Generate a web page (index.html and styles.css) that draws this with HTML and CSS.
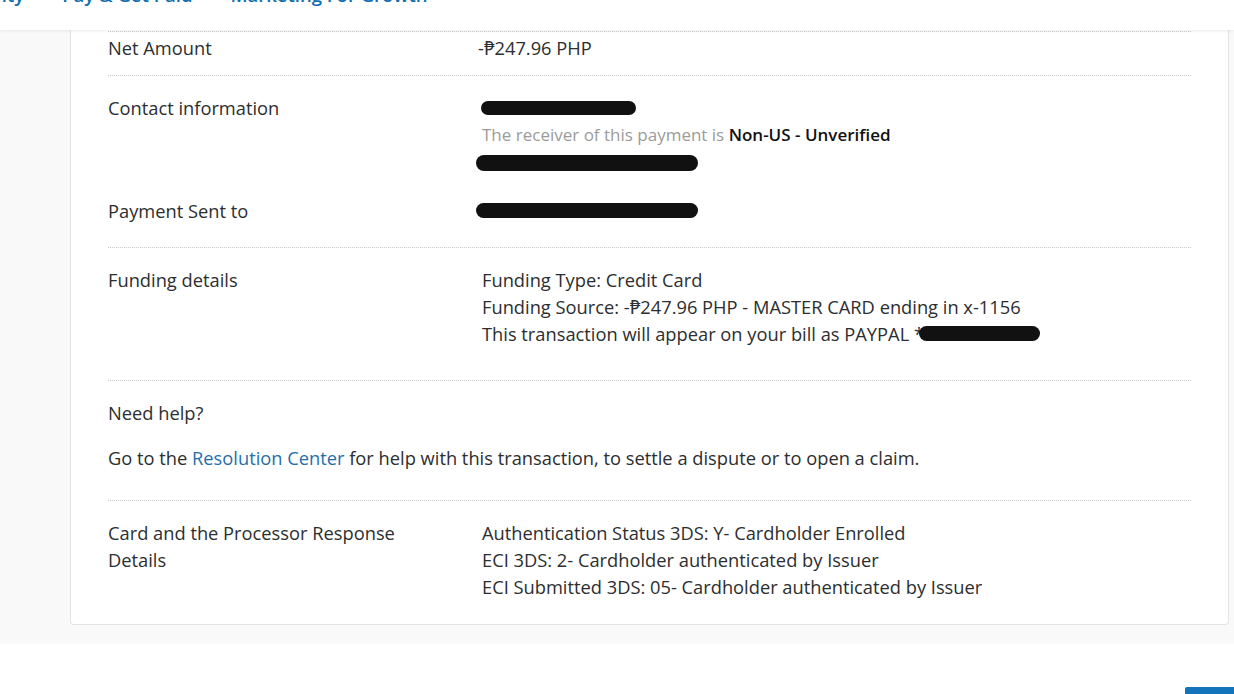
FILE: index.html
```html
<!DOCTYPE html>
<html lang="en">
<head>
<meta charset="utf-8">
<title>Transaction details</title>
<link rel="stylesheet" href="styles.css">
</head>
<body>
<header class="nav">
  <div class="nav-links">
    <a class="nav-link first" href="#">Activity</a>
    <a class="nav-link" href="#">Pay &amp; Get Paid</a>
    <a class="nav-link" href="#">Marketing For Growth</a>
  </div>
</header>
<main class="page">
  <section class="card">
    <div class="row row-first">
      <div class="label">Net Amount</div>
      <div class="value value-net">-₱247.96 PHP</div>
    </div>

    <div class="row">
      <div class="group">
        <div class="label">Contact information</div>
        <div class="value">
          <div class="line"><span class="blob blob-a"></span></div>
          <div class="line small"><span class="muted">The receiver of this payment is </span><strong>Non-US - Unverified</strong></div>
          <div class="line"><span class="blob blob-b"></span></div>
        </div>
      </div>
      <div class="group group-gap">
        <div class="label">Payment Sent to</div>
        <div class="value">
          <div class="line"><span class="blob blob-c"></span></div>
        </div>
      </div>
    </div>

    <div class="row row-funding">
      <div class="label">Funding details</div>
      <div class="value">
        <div class="line">Funding Type: Credit Card</div>
        <div class="line">Funding Source: -₱247.96 PHP - MASTER CARD ending in x-1156</div>
        <div class="line">This transaction will appear on your bill as PAYPAL *<span class="blob blob-d"></span></div>
      </div>
    </div>

    <div class="row row-help">
      <div class="help-title">Need help?</div>
      <p class="help-text">Go to the <a class="link" href="#">Resolution Center</a> for help with this transaction, to settle a dispute or to open a claim.</p>
    </div>

    <div class="row row-last">
      <div class="label">Card and the Processor Response<br>Details</div>
      <div class="value">
        <div class="line">Authentication Status 3DS: Y- Cardholder Enrolled</div>
        <div class="line">ECI 3DS: 2- Cardholder authenticated by Issuer</div>
        <div class="line">ECI Submitted 3DS: 05- Cardholder authenticated by Issuer</div>
      </div>
    </div>
  </section>
</main>
<footer class="footer">
  <button class="cta" type="button" aria-label="Done"></button>
</footer>
</body>
</html>
```

FILE: styles.css
```css
html, body {
  margin: 0;
  padding: 0;
}
body {
  background: #ffffff;
  font-family: "Open Sans", Lato, "Liberation Sans", sans-serif;
  color: #2c2e2f;
  overflow: hidden;
  width: 1234px;
  height: 694px;
}

.nav {
  height: 30px;
  background: #ffffff;
  box-shadow: 0 1px 3px rgba(0, 0, 0, 0.08);
  position: relative;
  z-index: 2;
  overflow: hidden;
}
.nav-links {
  display: flex;
  margin-top: -15px;
  margin-left: -42px;
}
.nav-link {
  font-size: 18.5px;
  line-height: 20px;
  color: #0f6db0;
  text-decoration: none;
  margin-right: 38px;
  font-weight: 600;
}

.page {
  background: #f9f9f9;
  padding: 0 5px 19px 70px;
}
.card {
  background: #ffffff;
  border: 1px solid #e3e3e3;
  border-top: none;
  border-radius: 0 0 4px 4px;
  padding: 1px 37px 0 37px;
}

.row {
  border-top: 1px dotted #c9c9c9;
  padding: 18px 0 33px 0;
  display: grid;
  grid-template-columns: 374px 1fr;
  font-size: 18.3px;
  line-height: 27px;
}
.row-first {
  padding: 2px 0 14px 0;
}
.row:nth-child(2) {
  display: block;
  padding: 18px 0 23px 0;
}
.row-help {
  display: block;
  padding: 18px 0 29px 0;
}
.row-last {
  padding: 18px 0 24px 0;
}

.group {
  display: grid;
  grid-template-columns: 374px 1fr;
}
.group-gap {
  margin-top: 22px;
}

.value-net {
  margin-left: -4px;
}

.line {
  min-height: 27px;
  display: flex;
  align-items: center;
  white-space: nowrap;
}
.small {
  font-size: 17px;
}
.muted {
  color: #9b9b9b;
  white-space: pre;
}
.small strong {
  color: #111111;
  font-weight: 600;
}

.blob {
  display: inline-block;
  background: #111111;
  border-radius: 8px;
}
.blob-a {
  width: 155px;
  height: 14px;
  margin-left: -1px;
}
.blob-b {
  width: 222px;
  height: 16px;
  margin-left: -6px;
  margin-top: 2px;
}
.blob-c {
  width: 222px;
  height: 15px;
  margin-left: -6px;
}
.blob-d {
  width: 121px;
  height: 15px;
  margin-left: -5px;
}

.help-title {
  line-height: 27px;
}
.help-text {
  margin: 18px 0 0 0;
  line-height: 27px;
}
.link {
  color: #1f6fab;
  text-decoration: none;
}

.footer {
  display: flex;
  justify-content: flex-end;
  padding-top: 43px;
}
.cta {
  width: 60px;
  height: 30px;
  border: none;
  background: #1373bb;
  margin-right: -11px;
  border-radius: 2px 0 0 0;
  padding: 0;
}
```
